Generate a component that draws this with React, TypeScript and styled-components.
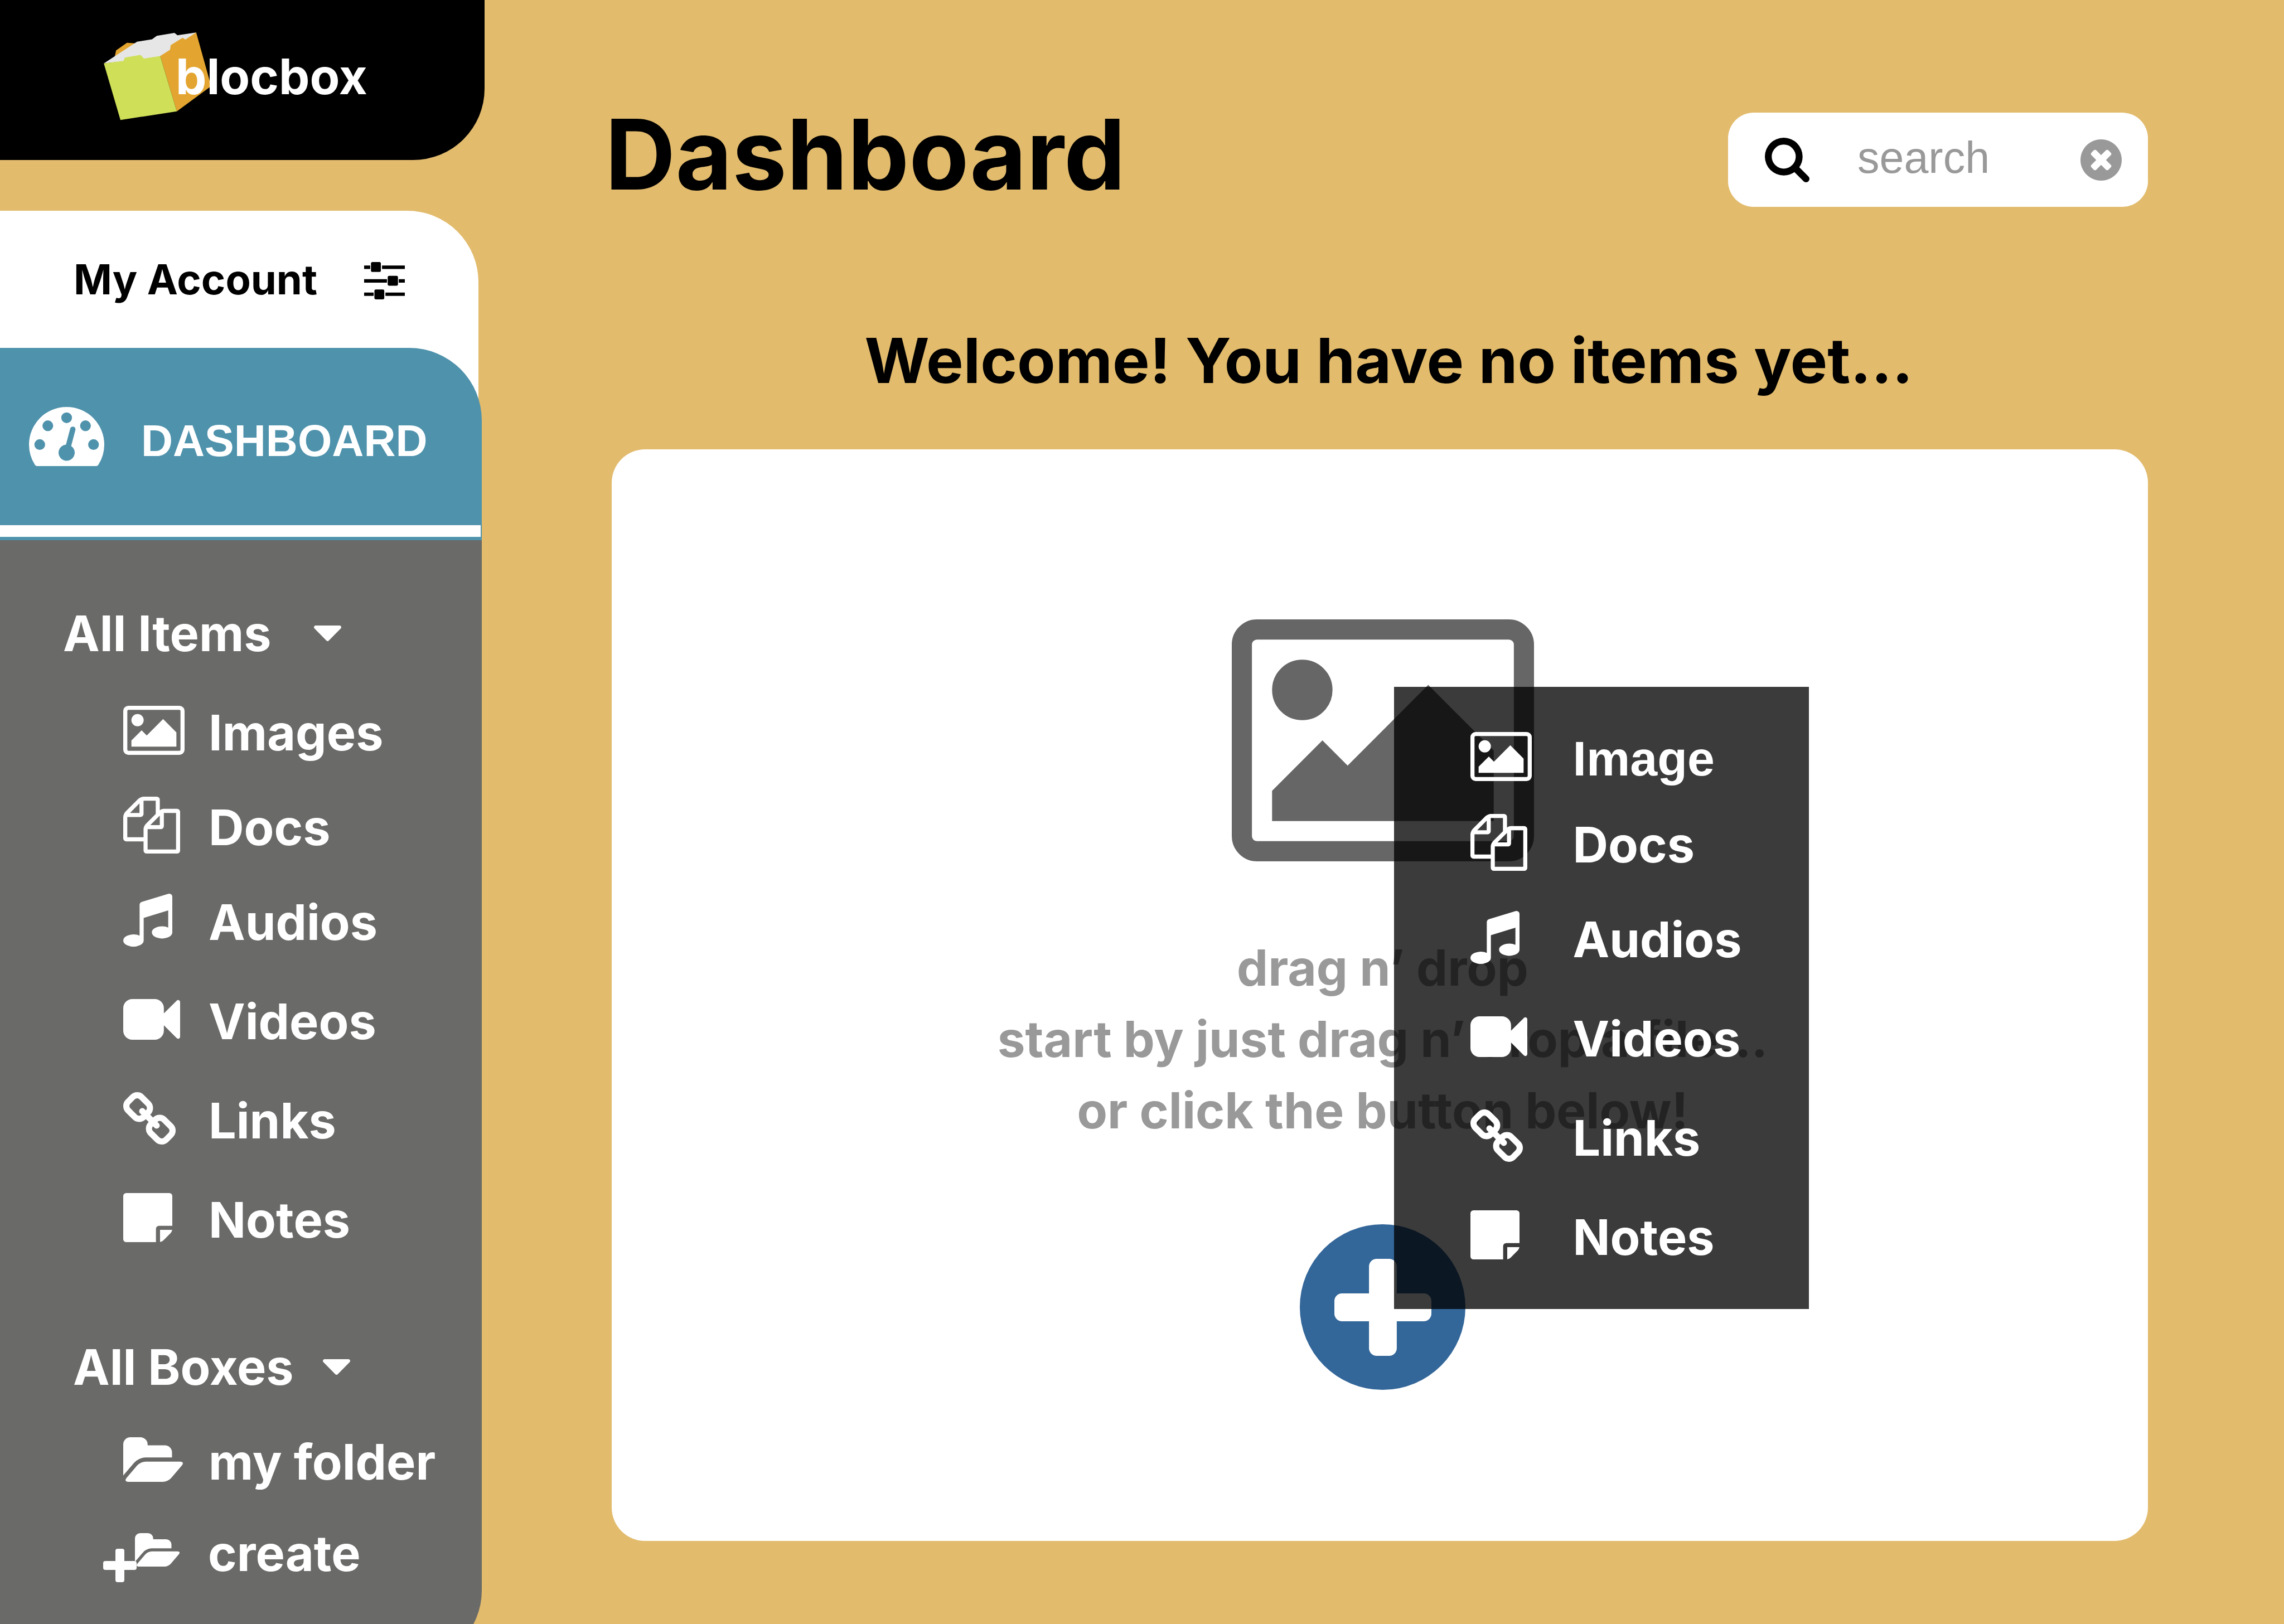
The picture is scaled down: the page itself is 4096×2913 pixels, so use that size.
import React, { useState } from 'react';
import styled, { createGlobalStyle } from 'styled-components';

const rounded = `Inter, 'Open Sans', sans-serif`;
const plain = `'Liberation Sans', Arial, sans-serif`;

const GlobalStyle = createGlobalStyle`
  * { box-sizing: border-box; }
  body { margin: 0; background: #e2bb6d; font-family: ${rounded}; font-weight: 700; }
  h1, h2, p, ul { margin: 0; padding: 0; }
  ul { list-style: none; }
  a { color: inherit; text-decoration: none; }
  svg { display: block; flex: none; fill: currentColor; }
  button { border: 0; padding: 0; background: none; color: inherit; font: inherit; cursor: pointer; }
`;

/* ---------- icons ---------- */

type Glyph = { box: string; w: number; h: number; d: string };

const glyphs: Record<string, Glyph> = {
  image: {
    box: '64 128 1920 1536', w: 110, h: 88,
    d: 'M704 576q0 80-56 136t-136 56-136-56-56-136 56-136 136-56 136 56 56 136zm1024 384v448h-1408v-192l320-320 160 160 512-512zm96-704h-1600q-13 0-22.5 9.5t-9.5 22.5v1216q0 13 9.5 22.5t22.5 9.5h1600q13 0 22.5-9.5t9.5-22.5v-1216q0-13-9.5-22.5t-22.5-9.5zm160 32v1216q0 66-47 113t-113 47h-1600q-66 0-113-47t-47-113v-1216q0-66 47-113t113-47h1600q66 0 113 47t47 113z',
  },
  docs: {
    box: '0 0 1792 1792', w: 102, h: 102,
    d: 'M1696 384q40 0 68 28t28 68v1216q0 40-28 68t-68 28h-960q-40 0-68-28t-28-68v-288h-544q-40 0-68-28t-28-68v-672q0-40 20-88t48-76l408-408q28-28 76-48t88-20h416q40 0 68 28t28 68v328q68-40 128-40h416zm-544 213l-299 299h299v-299zm-640-384l-299 299h299v-299zm196 647l316-316v-416h-384v416q0 40-28 68t-68 28h-416v640h512v-256q0-40 20-88t48-76zm956 804v-1152h-384v416q0 40-28 68t-68 28h-416v640h896z',
  },
  music: {
    box: '128 128 1536 1664', w: 88, h: 95,
    d: 'M1664 224v1120q0 50-34 89t-86 60.5-103.5 32-96.5 10.5-96.5-10.5-103.5-32-86-60.5-34-89 34-89 86-60.5 103.5-32 96.5-10.5q105 0 192 39v-537l-768 237v709q0 50-34 89t-86 60.5-103.5 32-96.5 10.5-96.5-10.5-103.5-32-86-60.5-34-89 34-89 86-60.5 103.5-32 96.5-10.5q105 0 192 39v-967q0-31 19-56.5t49-35.5l832-256q12-4 28-4 40 0 68 28t28 68z',
  },
  video: {
    box: '0 256 1792 1280', w: 102, h: 73,
    d: 'M1792 352v1088q0 42-39 59-13 5-25 5-27 0-45-19l-403-403v166q0 119-84.5 203.5t-203.5 84.5h-704q-119 0-203.5-84.5t-84.5-203.5v-704q0-119 84.5-203.5t203.5-84.5h704q119 0 203.5 84.5t84.5 203.5v165l403-402q18-19 45-19 12 0 25 5 39 17 39 59z',
  },
  link: {
    box: '80 16 1632 1632', w: 94, h: 94,
    d: 'M1520 1216q0-40-28-68l-208-208q-28-28-68-28-42 0-72 32 3 3 19 18.5t21.5 21.5 15 19 13 25.5 3.5 27.5q0 40-28 68t-68 28q-15 0-27.5-3.5t-25.5-13-19-15-21.5-21.5-18.5-19q-33 31-33 73 0 40 28 68l206 207q27 27 68 27 40 0 68-26l147-146q28-28 28-67zm-703-705q0-40-28-68l-206-207q-28-28-68-28-39 0-68 27l-147 146q-28 28-28 67 0 40 28 68l208 208q27 27 68 27 42 0 72-31-3-3-19-18.5t-21.5-21.5-15-19-13-25.5-3.5-27.5q0-40 28-68t68-28q15 0 27.5 3.5t25.5 13 19 15 21.5 21.5 18.5 19q33-31 33-73zm895 705q0 120-85 203l-147 146q-83 83-203 83-121 0-204-85l-206-207q-83-83-83-203 0-123 88-209l-88-88q-86 88-208 88-120 0-204-84l-208-208q-84-84-84-204t85-203l147-146q83-83 203-83 121 0 204 85l206 207q83 83 83 203 0 123-88 209l88 88q86-88 208-88 120 0 204 84l208 208q84 84 84 204z',
  },
  note: {
    box: '0 0 1536 1536', w: 88, h: 88,
    d: 'M96 0H1440a96 96 0 0 1 96 96V1024H1120a96 96 0 0 0-96 96V1536H96a96 96 0 0 1-96-96V96A96 96 0 0 1 96 0zM1152 1152h380c-8 48-35 90-60 115l-204 204c-28 28-70 52-116 61z',
  },
  folder: {
    box: '64 128 1879 1408', w: 107, h: 80,
    d: 'M1943 952q0 31-31 66l-336 396q-43 51-120.5 86.5t-143.5 35.5h-1088q-34 0-60.5-13t-26.5-43q0-31 31-66l336-396q43-51 120.5-86.5t143.5-35.5h1088q34 0 60.5 13t26.5 43zm-343-344v160h-832q-94 0-197 47.5t-164 119.5l-337 396-5 6q0-4-.5-12.5t-.5-12.5v-960q0-92 66-158t158-66h320q92 0 158 66t66 158v32h544q92 0 158 66t66 158z',
  },
  gauge: {
    box: '0 256 1792 1408', w: 135, h: 106,
    d: 'M384 1152q0-53-37.5-90.5t-90.5-37.5-90.5 37.5-37.5 90.5 37.5 90.5 90.5 37.5 90.5-37.5 37.5-90.5zm192-448q0-53-37.5-90.5t-90.5-37.5-90.5 37.5-37.5 90.5 37.5 90.5 90.5 37.5 90.5-37.5 37.5-90.5zm428 481l101-382q6-26-7.5-48.5t-38.5-29.5-48 6.5-30 39.5l-101 382q-60 5-107 43.5t-63 98.5q-20 77 20 146t117 89 146-20 89-117q16-60-6-117t-72-91zm660-33q0-53-37.5-90.5t-90.5-37.5-90.5 37.5-37.5 90.5 37.5 90.5 90.5 37.5 90.5-37.5 37.5-90.5zm-640-640q0-53-37.5-90.5t-90.5-37.5-90.5 37.5-37.5 90.5 37.5 90.5 90.5 37.5 90.5-37.5 37.5-90.5zm448 192q0-53-37.5-90.5t-90.5-37.5-90.5 37.5-37.5 90.5 37.5 90.5 90.5 37.5 90.5-37.5 37.5-90.5zm320 448q0 261-141 483-19 29-54 29h-1402q-35 0-54-29-141-221-141-483 0-182 71-348t191-286 286-191 348-71 348 71 286 191 191 286 71 348z',
  },
  caret: {
    box: '384 640 1024 576', w: 49, h: 28,
    d: 'M1408 704q0 26-19 45l-448 448q-19 19-45 19t-45-19l-448-448q-19-19-19-45t19-45 45-19h896q26 0 45 19t19 45z',
  },
  search: {
    box: '64 128 1664 1664', w: 80, h: 80,
    d: 'M1216 832q0-185-131.5-316.5t-316.5-131.5-316.5 131.5-131.5 316.5 131.5 316.5 316.5 131.5 316.5-131.5 131.5-316.5zm512 832q0 52-38 90t-90 38q-54 0-90-38l-343-342q-179 124-399 124-143 0-273.5-55.5t-225-150-150-225-55.5-273.5 55.5-273.5 150-225 225-150 273.5-55.5 273.5 55.5 225 150 150 225 55.5 273.5q0 220-124 399l343 343q37 37 37 90z',
  },
  clear: {
    box: '128 128 1536 1536', w: 74, h: 74,
    d: 'M1277 1122q0-26-19-45l-181-181 181-181q19-19 19-45 0-27-19-46l-90-90q-19-19-46-19-26 0-45 19l-181 181-181-181q-19-19-45-19-27 0-46 19l-90 90q-19 19-19 46 0 26 19 45l181 181-181 181q-19 19-19 45 0 27 19 46l90 90q19 19 46 19 26 0 45-19l181-181 181 181q19 19 45 19 27 0 46-19l90-90q19-19 19-46zm387-226q0 209-103 385.5t-279.5 279.5-385.5 103-385.5-103-279.5-279.5-103-385.5 103-385.5 279.5-279.5 385.5-103 385.5 103 279.5 279.5 103 385.5z',
  },
};

function Icon({ name, width, height }: { name: string; width?: number; height?: number }) {
  const g = glyphs[name];
  return (
    <svg viewBox={g.box} width={width ?? g.w} height={height ?? g.h} preserveAspectRatio="none" aria-hidden="true">
      <path d={g.d} />
    </svg>
  );
}

const CreateIcon = () => (
  <svg viewBox="0 -24 137 112" width="137" height="112" aria-hidden="true">
    <path transform="translate(57 0) scale(.0426) translate(-64 -128)" d={glyphs.folder.d} />
    <rect x="22" y="28" width="16" height="60" rx="4" />
    <rect x="0" y="50" width="60" height="16" rx="4" />
  </svg>
);

const PlusIcon = () => (
  <svg viewBox="0 0 255 255" width="174" height="174" aria-hidden="true">
    <rect x="91" y="0" width="73" height="255" rx="20" />
    <rect x="0" y="91" width="255" height="73" rx="20" />
  </svg>
);

const SlidersIcon = () => (
  <svg viewBox="0 -6 107 104" width="73" height="71" aria-hidden="true">
    <path d="M0 9h16v9H0zM47 9h60v9H47zM0 45h60v9H0zM91 45h16v9H91zM0 80h25v9H0zM56 80h51v9H56z" />
    <rect x="18" y="0" width="26" height="26" rx="4" />
    <rect x="62" y="36" width="27" height="26" rx="4" />
    <rect x="27" y="72" width="26" height="26" rx="4" />
  </svg>
);

const BoxLogo = () => (
  <svg viewBox="273 85 283 231" width="193" height="158" aria-hidden="true">
    <g transform="scale(.893 .5102)">
      <path fill="#e3a530" d="M338 293L342 259L374 220L400 223z" />
      <path fill="#e6e6e6" d="M306 326L404 214L448 202L462 184L514 169L523 181L578 167L560 240L472 290L424 305z" />
      <path fill="#e3a530" d="M472 288L501 256L503 232L538 194L546 203L578 167L622 443L521 573z" />
      <path fill="#cfdf58" d="M306 326L364 313L368 296L414 282L424 301L472 288L521 573L355 618z" />
    </g>
  </svg>
);

/* ---------- layout ---------- */

const Page = styled.div`
  display: flex;
  height: 100vh;
  overflow: hidden;
  background: #e2bb6d;
  color: #000;
`;

const Sidebar = styled.aside`
  display: flex;
  flex-direction: column;
  flex: none;
  width: 869px;
`;

const Brand = styled.a`
  display: flex;
  align-items: center;
  height: 287px;
  padding: 0 0 14px 186px;
  border-radius: 0 0 128px 0;
  background: #000;
  color: #fff;
`;

const BrandName = styled.span`
  margin-left: -64px;
  font-size: 88px;
  line-height: 104px;
`;

const Account = styled.a`
  display: flex;
  align-items: center;
  gap: 84px;
  width: 858px;
  height: 376px;
  margin: 91px 0 -130px;
  padding: 0 0 130px 132px;
  border-radius: 0 128px 0 0;
  background: #fff;
  font-size: 74px;
`;

const Current = styled.div`
  width: 864px;
  padding-bottom: 6px;
  border-radius: 0 130px 0 0;
  background: #4f92ac;
`;

const CurrentLink = styled.a`
  display: flex;
  align-items: center;
  gap: 66px;
  height: 318px;
  padding-left: 52px;
  color: #fff;
  font-family: ${plain};
  font-size: 79px;
`;

const CurrentLabel = styled.span`
  padding-top: 16px;
`;

const Stripe = styled.div`
  height: 21px;
  margin-right: 2px;
  background: #fff;
`;

const Nav = styled.nav`
  flex: 1;
  width: 864px;
  margin-bottom: -68px;
  padding-top: 115px;
  border-radius: 0 0 128px 0;
  background: #6a6a68;
  color: #fff;
  font-size: 88px;
`;

const Group = styled.section<{ $indent: number }>`
  & + & {
    margin-top: 160px;
  }
  > button {
    padding-left: ${(p) => p.$indent}px;
  }
`;

const GroupToggle = styled.button<{ $gap: number }>`
  display: flex;
  align-items: center;
  gap: ${(p) => p.$gap}px;
  height: 104px;
  line-height: 104px;
`;

const pitch = { xs: 154, sm: 164, md: 170, lg: 178 };
type Pitch = keyof typeof pitch;

const Row = styled.li<{ $pitch: Pitch }>`
  display: flex;
  align-items: flex-end;
  height: ${(p) => pitch[p.$pitch]}px;
`;

const NavLink = styled.a<{ $wide?: boolean }>`
  display: flex;
  align-items: center;
  height: 104px;
  padding-left: ${(p) => (p.$wide ? 185 : 221)}px;
  line-height: 104px;
`;

const IconSlot = styled.span<{ $width: number }>`
  display: flex;
  align-items: center;
  flex: none;
  width: ${(p) => p.$width}px;
  padding-bottom: 8px;
`;

const Main = styled.main`
  display: flex;
  flex: 1;
  flex-direction: column;
  padding: 190px 244px 149px 228px;
`;

const Header = styled.header`
  display: flex;
  align-items: flex-start;
  justify-content: space-between;
`;

const Title = styled.h1`
  margin-left: -12px;
  font-size: 175px;
  line-height: 172px;
`;

const Search = styled.form`
  display: flex;
  align-items: center;
  width: 753px;
  height: 169px;
  margin-top: 12px;
  padding: 0 47px 0 66px;
  border-radius: 46px;
  background: #fff;
`;

const SearchInput = styled.input`
  flex: 1;
  min-width: 0;
  margin: 0 40px 0 86px;
  padding: 0 0 8px;
  border: 0;
  outline: 0;
  background: none;
  color: #000;
  font: 400 79px ${plain};

  &::placeholder {
    color: #999;
    opacity: 1;
  }
`;

const ClearButton = styled.button`
  color: #999;
`;

const Welcome = styled.h2`
  margin-top: 211px;
  padding-left: 32px;
  font-size: 112px;
  line-height: 128px;
  text-align: center;
`;

const DropCard = styled.section`
  position: relative;
  display: flex;
  flex: 1;
  flex-direction: column;
  align-items: center;
  margin-top: 96px;
  padding: 305px 0 0 10px;
  border-radius: 60px;
  background: #fff;
  color: #666;
`;

const Hint = styled.p`
  margin: 127px 0 140px;
  color: #999;
  font-size: 89px;
  line-height: 128px;
  text-align: center;
`;

const AddButton = styled.button`
  display: flex;
  align-items: center;
  justify-content: center;
  width: 297px;
  height: 297px;
  border-radius: 50%;
  background: #369;
  color: #fff;
`;

const AddMenu = styled.ul`
  position: absolute;
  top: 426px;
  left: calc(50% + 25px);
  width: 744px;
  padding: 17px 0 77px;
  background: rgba(0, 0, 0, 0.77);
  color: #fff;
  font-size: 88px;
`;

const MenuButton = styled.button<{ $plain?: boolean }>`
  display: flex;
  align-items: center;
  width: 100%;
  height: 104px;
  padding-left: 137px;
  font-family: ${(p) => (p.$plain ? plain : rounded)};
  line-height: 104px;
`;

/* ---------- content ---------- */

const items: { icon: string; label: string; pitch: Pitch }[] = [
  { icon: 'image', label: 'Images', pitch: 'lg' },
  { icon: 'docs', label: 'Docs', pitch: 'md' },
  { icon: 'music', label: 'Audios', pitch: 'md' },
  { icon: 'video', label: 'Videos', pitch: 'lg' },
  { icon: 'link', label: 'Links', pitch: 'lg' },
  { icon: 'note', label: 'Notes', pitch: 'lg' },
];

const addItems: { icon: string; label: string; pitch: Pitch; plain?: boolean }[] = [
  { icon: 'image', label: 'Image', pitch: 'sm', plain: true },
  { icon: 'docs', label: 'Docs', pitch: 'xs' },
  { icon: 'music', label: 'Audios', pitch: 'md' },
  { icon: 'video', label: 'Videos', pitch: 'lg' },
  { icon: 'link', label: 'Links', pitch: 'lg' },
  { icon: 'note', label: 'Notes', pitch: 'lg' },
];

export default function App() {
  const [query, setQuery] = useState('');
  const [itemsOpen, setItemsOpen] = useState(true);
  const [boxesOpen, setBoxesOpen] = useState(true);
  const [menuOpen, setMenuOpen] = useState(true);

  return (
    <Page>
      <GlobalStyle />
      <Sidebar>
        <Brand href="#home">
          <BoxLogo />
          <BrandName>blocbox</BrandName>
        </Brand>
        <Account href="#account">
          My Account
          <SlidersIcon />
        </Account>
        <Current>
          <CurrentLink href="#dashboard" aria-current="page">
            <Icon name="gauge" />
            <CurrentLabel>DASHBOARD</CurrentLabel>
          </CurrentLink>
          <Stripe />
        </Current>
        <Nav>
          <Group $indent={113}>
            <GroupToggle $gap={76} aria-expanded={itemsOpen} onClick={() => setItemsOpen(!itemsOpen)}>
              All Items
              <Icon name="caret" />
            </GroupToggle>
            {itemsOpen && (
              <ul>
                {items.map((item) => (
                  <Row key={item.label} $pitch={item.pitch}>
                    <NavLink href={`#${item.label}`}>
                      <IconSlot $width={153}>
                        <Icon name={item.icon} />
                      </IconSlot>
                      {item.label}
                    </NavLink>
                  </Row>
                ))}
              </ul>
            )}
          </Group>
          <Group $indent={131}>
            <GroupToggle $gap={52} aria-expanded={boxesOpen} onClick={() => setBoxesOpen(!boxesOpen)}>
              All Boxes
              <Icon name="caret" />
            </GroupToggle>
            {boxesOpen && (
              <ul>
                <Row $pitch="md">
                  <NavLink href="#my-folder">
                    <IconSlot $width={153}>
                      <Icon name="folder" />
                    </IconSlot>
                    my folder
                  </NavLink>
                </Row>
                <Row $pitch="sm">
                  <NavLink href="#create" $wide>
                    <IconSlot $width={188}>
                      <CreateIcon />
                    </IconSlot>
                    create
                  </NavLink>
                </Row>
              </ul>
            )}
          </Group>
        </Nav>
      </Sidebar>

      <Main>
        <Header>
          <Title>Dashboard</Title>
          <Search role="search" onSubmit={(e) => e.preventDefault()}>
            <label htmlFor="search" aria-label="Search">
              <Icon name="search" />
            </label>
            <SearchInput id="search" placeholder="search" value={query} onChange={(e) => setQuery(e.target.value)} />
            <ClearButton type="button" aria-label="Clear search" onClick={() => setQuery('')}>
              <Icon name="clear" />
            </ClearButton>
          </Search>
        </Header>

        <Welcome>Welcome! You have no items yet...</Welcome>

        <DropCard>
          <Icon name="image" width={542} height={434} />
          <Hint>
            drag n’ drop
            <br />
            start by just drag n’ drop a file...
            <br />
            or click the button below!
          </Hint>
          <AddButton aria-label="Add item" aria-expanded={menuOpen} onClick={() => setMenuOpen(!menuOpen)}>
            <PlusIcon />
          </AddButton>
          {menuOpen && (
            <AddMenu>
              {addItems.map((item) => (
                <Row key={item.label} $pitch={item.pitch}>
                  <MenuButton $plain={item.plain}>
                    <IconSlot $width={184}>
                      <Icon name={item.icon} />
                    </IconSlot>
                    {item.label}
                  </MenuButton>
                </Row>
              ))}
            </AddMenu>
          )}
        </DropCard>
      </Main>
    </Page>
  );
}
